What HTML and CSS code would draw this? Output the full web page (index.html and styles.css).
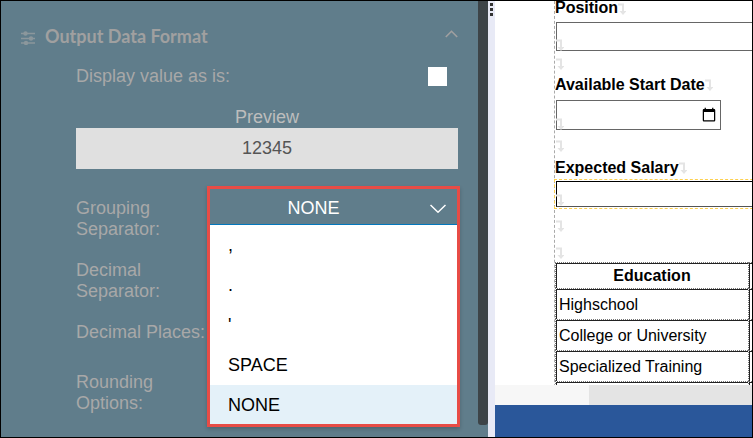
FILE: index.html
```
<!DOCTYPE html>
<html lang="en">
<head>
<meta charset="utf-8">
<title>Output Data Format</title>
<link rel="stylesheet" href="styles.css">
</head>
<body>
<svg class="defs" aria-hidden="true">
  <symbol id="mark" viewBox="0 0 8 12"><path d="M0 1.500H5V9" fill="none" stroke="#e4e4e4" stroke-width="2"/><path d="M1.500 8H8.500L5 12Z" fill="#e4e4e4"/></symbol>
</svg>
<main class="app">
  <section class="side">
    <div class="panel">
      <header class="panel-head">
        <svg class="tune" viewBox="0 0 14 14" aria-hidden="true"><path d="M0 2.500H14M0 7.500H14M0 12H14" stroke="#8b979c" stroke-width="1.500"/><g fill="#8b979c"><circle cx="4.500" cy="2.500" r="2.200"/><circle cx="10" cy="7.500" r="2.200"/><circle cx="5" cy="12" r="2.200"/></g></svg>
        <h2>Output Data Format</h2>
        <button class="collapse" aria-label="Collapse"><svg viewBox="0 0 13 8"><path d="M.8 7 6.500 1.300 12.200 7" fill="none" stroke="#a0a0a0" stroke-width="1.600"/></svg></button>
      </header>
      <div class="fields">
        <div class="check-row">
          <label for="asis">Display value as is:</label>
          <input type="checkbox" id="asis">
        </div>
        <div class="preview">
          <span>Preview</span>
          <output>12345</output>
        </div>
        <div class="row">
          <label for="grouping">Grouping Separator:</label>
          <div class="picker">
            <div class="picker-head">
              <select id="grouping"><option>NONE</option><option>SPACE</option></select>
              <svg viewBox="0 0 16 9" aria-hidden="true"><path d="M.5 1 8 8.200 15.500 1" fill="none" stroke="#fff" stroke-width="1.500"/></svg>
            </div>
            <ul class="menu" role="listbox" aria-label="Grouping Separator">
              <li role="option">,</li>
              <li role="option">.</li>
              <li role="option">'</li>
              <li role="option">SPACE</li>
              <li role="option" aria-selected="true">NONE</li>
            </ul>
          </div>
        </div>
        <div class="row"><span>Decimal Separator:</span></div>
        <div class="row places"><span>Decimal Places:</span></div>
        <div class="row"><span>Rounding Options:</span></div>
      </div>
    </div>
    <div class="track"><div class="thumb"></div></div>
  </section>
  <div class="splitter"><svg viewBox="0 0 3 13" aria-hidden="true"><path d="M0 0h3v3H0zM0 5h3v3H0zM0 10h3v3H0z" fill="#333"/></svg></div>
  <section class="editor">
    <div class="doc">
      <div class="page">
        <div class="line"><label for="position">Position</label><svg class="mark"><use href="#mark"/></svg></div>
        <div class="field"><input type="text" id="position"><svg class="mark"><use href="#mark"/></svg></div>
        <div class="blank"><svg class="mark"><use href="#mark"/></svg></div>
        <div class="line"><label for="start">Available Start Date</label><svg class="mark"><use href="#mark"/></svg></div>
        <div class="field"><input type="date" id="start"><svg class="mark"><use href="#mark"/></svg></div>
        <div class="blank wide"><svg class="mark"><use href="#mark"/></svg></div>
        <div class="line"><label for="salary">Expected Salary</label><svg class="mark"><use href="#mark"/></svg></div>
        <div class="field active"><input type="text" id="salary"><svg class="mark"><use href="#mark"/></svg></div>
        <div class="blank tall"><svg class="mark"><use href="#mark"/></svg></div>
        <div class="blank tall"><svg class="mark"><use href="#mark"/></svg></div>
        <table>
          <thead><tr><th>Education</th><th></th></tr></thead>
          <tbody>
            <tr><td>Highschool</td><td></td></tr>
            <tr><td>College or University</td><td></td></tr>
            <tr><td>Specialized Training</td><td></td></tr>
            <tr><td></td><td></td></tr>
          </tbody>
        </table>
      </div>
    </div>
    <div class="hscroll"><div class="hthumb"></div></div>
    <footer class="status"></footer>
  </section>
</main>
</body>
</html>
```
FILE: styles.css
```
* { box-sizing: border-box; }
body { margin: 0; font-family: "Liberation Sans", Arial, sans-serif; }
.defs { position: absolute; width: 0; height: 0; }
.app { display: flex; height: 100vh; border: 1px solid #000; overflow: hidden; }

.side { flex: 487 1 0; min-width: 0; display: flex; background: #607d8b; }
.panel { flex: 1; min-width: 0; padding: 23px 20px 0; font-size: 18px; line-height: 21px; color: #a8a8a8; }
.panel-head { display: flex; align-items: center; height: 24px; }
.tune { width: 14px; height: 14px; margin-top: 4px; }
.panel-head h2 { flex: 1; margin: 0 0 0 10px; font: bold 18px/24px Lato, sans-serif; color: #a0a0a0; }
.collapse { display: flex; padding: 0; border: 0; background: none; margin-bottom: 5px; }
.collapse svg { width: 13px; height: 8px; }
.fields { padding-left: 55px; }
.check-row { display: flex; justify-content: space-between; align-items: center; margin-top: 18px; padding-right: 11px; }
.check-row input { appearance: none; width: 19px; height: 19px; margin: 0; background: #fff; }
.preview { margin: 20px 0 17px; text-align: center; color: #bdbdbd; }
.preview span { display: block; }
.preview output { display: block; height: 41px; line-height: 40px; background: #e0e0e0; color: #555; }
.row { position: relative; padding-top: 12px; margin-bottom: 8px; }
.row > label, .row > span { display: block; width: 130px; }
.row.places { margin-bottom: 17px; }
.picker { position: absolute; top: 0; left: 131px; right: -2px; border: 3px solid #e84c46; box-shadow: 0 2px 4px rgba(0, 0, 0, .2); background: #fff; color: #000; z-index: 1; }
.picker-head { display: flex; align-items: center; height: 36px; padding-right: 11px; background: #607d8b; border-bottom: 1px solid #0277bd; }
.picker-head select { flex: 1; height: 35px; padding: 4px 13px 0 0; appearance: none; border: 0; background: none; color: #fff; font: inherit; text-align: center; text-align-last: center; }
.picker-head svg { width: 16px; height: 9px; margin-top: 4px; }
.menu { list-style: none; margin: 0; padding: 0; }
.menu li { height: 40px; padding-left: 18px; line-height: 40px; }
.menu li:last-child { height: 39px; }
.menu li[aria-selected] { background: #e4f1f9; }
.track { width: 10px; padding-bottom: 12px; }
.thumb { height: 100%; background: #3d4448; border-radius: 0 0 3px 3px; }

.splitter { width: 7px; background: #e8eaf6; }
.splitter svg { display: block; width: 3px; height: 13px; margin: 2px; }

.editor { flex: 257 1 0; min-width: 0; display: flex; flex-direction: column; background: #fff; }
.doc { flex: 1; min-height: 0; overflow: hidden; padding-left: 59px; }
.page { border-left: 1px dashed #aaa; font-size: 16px; width: 320px; }
.mark { display: block; width: 8px; height: 12px; }
.line { display: flex; align-items: center; height: 20px; font-weight: bold; line-height: 20px; }
.line:first-child { height: 16px; line-height: 14px; align-items: flex-start; }
.line:first-child .mark { margin-top: 2px; }
.field { position: relative; padding: 5px 0 0 1px; }
.field input { display: block; width: 100%; height: 29px; border: 1px solid #666; background: #fff; margin: 0; }
.field input[type="date"] { width: 165px; height: 30px; padding: 0 1px; font-size: 16px; }
.field input::-webkit-datetime-edit { opacity: 0; }
.field .mark { position: absolute; left: 1px; bottom: 0; }
.blank { height: 24px; padding: 7px 0 0 1px; }
.blank.wide { height: 28px; padding-top: 10px; }
.field.active { margin: 1px 0 0 -1px; padding: 1px 0 1px 1px; border: 1px dashed #fdd04f; }
.field.active input { height: 26px; border-color: #000 #000 #555; }
.field.active .mark { bottom: 2px; }
.blank.tall { height: 27px; padding-top: 11px; }
.blank.tall + .blank.tall { height: 26px; }
table { border-collapse: separate; border-spacing: 0; table-layout: fixed; width: 100%; }
th:first-child { width: 193px; }
th, td { height: 31px; padding: 1px 3px 0; text-align: left; border: 0 dotted #777; border-width: 1px 0 0 1px; box-shadow: inset 1px 1px #222; }
th { height: 26px; text-align: center; }

.hscroll { height: 20px; background: #f7f7f7; padding-left: 94px; }
.hthumb { height: 100%; background: #e4e4e4; }
.status { height: 32px; background: #2a579a; }
```
